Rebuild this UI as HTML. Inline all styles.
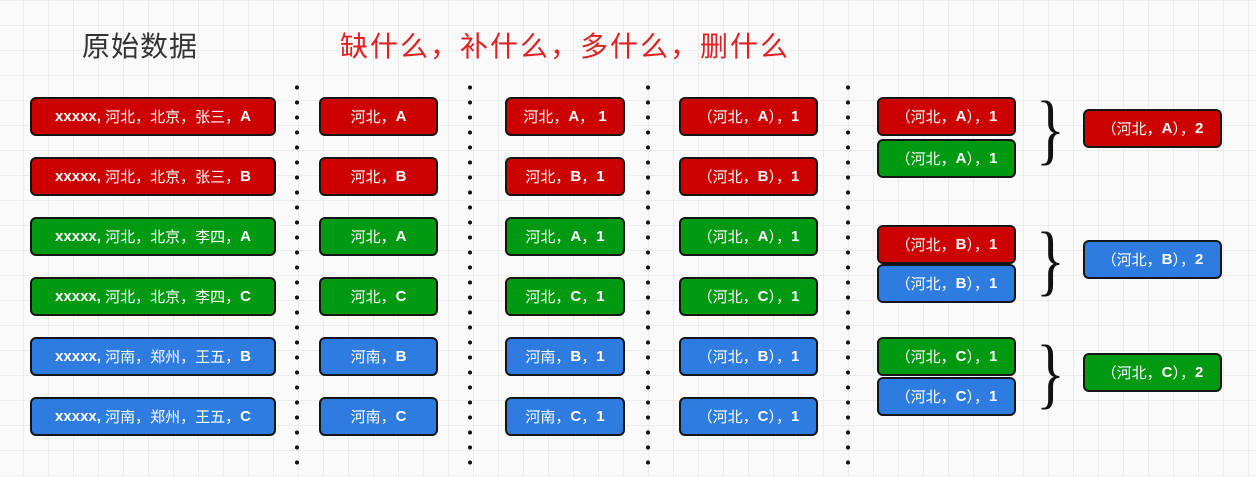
<!DOCTYPE html><html><head><meta charset="utf-8"><style>
body{margin:0;width:1256px;height:477px;overflow:hidden;background-color:#fafafa;
background-image:linear-gradient(#ececec 1px,transparent 1px),linear-gradient(90deg,#ececec 1px,transparent 1px);background-size:25px 25px;background-position:-2px 0;
font-family:"Liberation Sans","Noto Sans CJK SC",sans-serif;position:relative}
.b{position:absolute;height:35px;border:2px solid #151515;border-radius:6px;color:#fff;font-size:15px;font-weight:normal;display:flex;align-items:center;justify-content:center;box-sizing:content-box;white-space:pre}
.b b{font-weight:bold}
.r{background:#cc0000}.g{background:#009a12}.u{background:#2f7ce0}
.d{position:absolute;width:4px;top:80px;height:385px;background-image:radial-gradient(circle,#111 2px,transparent 2.2px);background-size:4px 15px}
.t{position:absolute;font-size:28px;top:25px;font-weight:normal}
.br{position:absolute;font-size:60px;font-family:"Liberation Serif",serif;color:#111;line-height:1}
</style></head><body>
<div class="t" style="left:82px;color:#333;letter-spacing:1px">原始数据</div>
<div class="t" style="left:340px;color:#dd2222;letter-spacing:2px">缺什么，补什么，多什么，删什么</div>
<div class="d" style="left:295px"></div><div class="d" style="left:468px"></div><div class="d" style="left:646px"></div><div class="d" style="left:846px"></div>

<div class="b r" style="left:30px;top:97px;width:242px"><b>xxxxx,</b> 河北，北京，张三，<b>A</b></div>
<div class="b r" style="left:30px;top:157px;width:242px"><b>xxxxx,</b> 河北，北京，张三，<b>B</b></div>
<div class="b g" style="left:30px;top:217px;width:242px"><b>xxxxx,</b> 河北，北京，李四，<b>A</b></div>
<div class="b g" style="left:30px;top:277px;width:242px"><b>xxxxx,</b> 河北，北京，李四，<b>C</b></div>
<div class="b u" style="left:30px;top:337px;width:242px"><b>xxxxx,</b> 河南，郑州，王五，<b>B</b></div>
<div class="b u" style="left:30px;top:397px;width:242px"><b>xxxxx,</b> 河南，郑州，王五，<b>C</b></div>

<div class="b r" style="left:319px;top:97px;width:115px">河北，<b>A</b></div>
<div class="b r" style="left:319px;top:157px;width:115px">河北，<b>B</b></div>
<div class="b g" style="left:319px;top:217px;width:115px">河北，<b>A</b></div>
<div class="b g" style="left:319px;top:277px;width:115px">河北，<b>C</b></div>
<div class="b u" style="left:319px;top:337px;width:115px">河南，<b>B</b></div>
<div class="b u" style="left:319px;top:397px;width:115px">河南，<b>C</b></div>

<div class="b r" style="left:505px;top:97px;width:116px">河北，<b>A</b>， <b>1</b></div>
<div class="b r" style="left:505px;top:157px;width:116px">河北，<b>B</b>，<b>1</b></div>
<div class="b g" style="left:505px;top:217px;width:116px">河北，<b>A</b>，<b>1</b></div>
<div class="b g" style="left:505px;top:277px;width:116px">河北，<b>C</b>，<b>1</b></div>
<div class="b u" style="left:505px;top:337px;width:116px">河南，<b>B</b>，<b>1</b></div>
<div class="b u" style="left:505px;top:397px;width:116px">河南，<b>C</b>，<b>1</b></div>

<div class="b r" style="left:679px;top:97px;width:135px">（河北，<b>A</b>），<b>1</b></div>
<div class="b r" style="left:679px;top:157px;width:135px">（河北，<b>B</b>），<b>1</b></div>
<div class="b g" style="left:679px;top:217px;width:135px">（河北，<b>A</b>），<b>1</b></div>
<div class="b g" style="left:679px;top:277px;width:135px">（河北，<b>C</b>），<b>1</b></div>
<div class="b u" style="left:679px;top:337px;width:135px">（河北，<b>B</b>），<b>1</b></div>
<div class="b u" style="left:679px;top:397px;width:135px">（河北，<b>C</b>），<b>1</b></div>

<div class="b r" style="left:877px;top:97px;width:135px">（河北，<b>A</b>），<b>1</b></div>
<div class="b g" style="left:877px;top:139px;width:135px">（河北，<b>A</b>），<b>1</b></div>
<div class="b r" style="left:877px;top:225px;width:135px">（河北，<b>B</b>），<b>1</b></div>
<div class="b u" style="left:877px;top:264px;width:135px">（河北，<b>B</b>），<b>1</b></div>
<div class="b g" style="left:877px;top:337px;width:135px">（河北，<b>C</b>），<b>1</b></div>
<div class="b u" style="left:877px;top:377px;width:135px">（河北，<b>C</b>），<b>1</b></div>

<div class="br" style="left:1036px;top:90px;transform:scaleY(1.3);transform-origin:top">}</div>
<div class="br" style="left:1036px;top:221px;transform:scaleY(1.3);transform-origin:top">}</div>
<div class="br" style="left:1036px;top:334px;transform:scaleY(1.3);transform-origin:top">}</div>

<div class="b r" style="left:1083px;top:109px;width:135px">（河北，<b>A</b>），<b>2</b></div>
<div class="b u" style="left:1083px;top:240px;width:135px">（河北，<b>B</b>），<b>2</b></div>
<div class="b g" style="left:1083px;top:353px;width:135px">（河北，<b>C</b>），<b>2</b></div>
</body></html>
